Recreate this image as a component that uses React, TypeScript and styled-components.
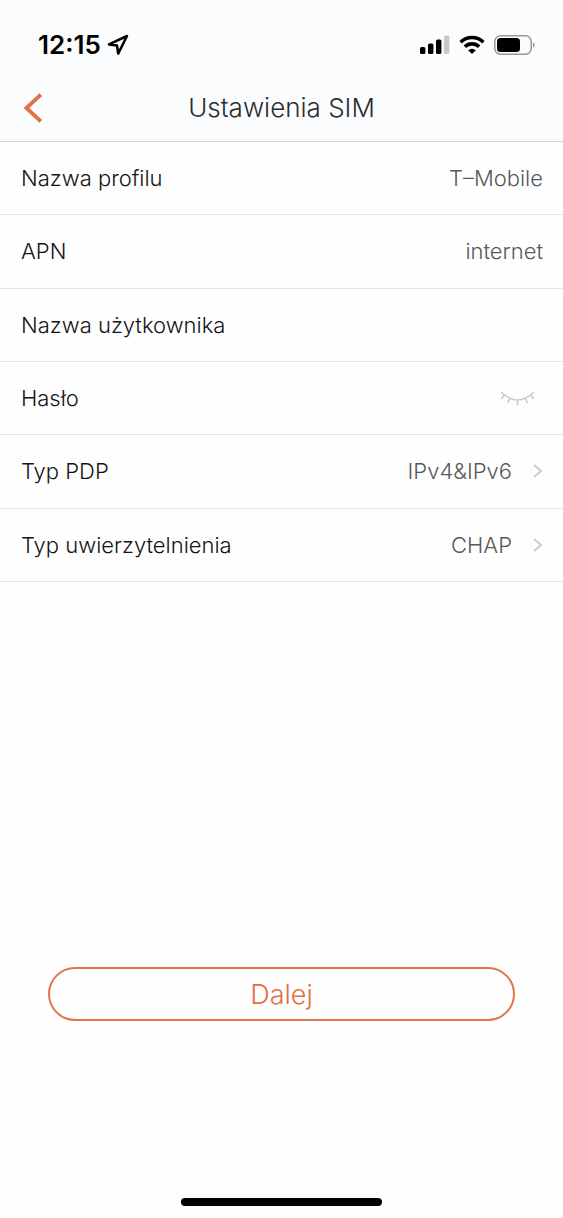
import React, { useState } from "react";
import styled, { createGlobalStyle } from "styled-components";

const accent = "#e36f43";

const GlobalStyle = createGlobalStyle`
  *, *::before, *::after { box-sizing: border-box; }
  body {
    margin: 0;
    background: #fefefe;
    font-family: Inter, "Liberation Sans", sans-serif;
    color: #141416;
  }
  button, input, select { font: inherit; color: inherit; }
`;

const Screen = styled.div`
  display: flex;
  flex-direction: column;
  min-height: 100vh;
`;

const Header = styled.header`
  background: #fafcfe;
  border-bottom: 1px solid #d2d6db;
`;

const StatusBar = styled.div`
  display: flex;
  align-items: center;
  justify-content: space-between;
  height: 74px;
  padding: 15px 27px 0 38px;
  color: #000;
`;

const Clock = styled.div`
  display: flex;
  align-items: center;
  gap: 6px;
  font-size: 26px;
  font-weight: 600;
  line-height: 32px;
`;

const StatusIcons = styled.div`
  display: flex;
  align-items: center;
  gap: 9px;
`;

const NavBar = styled.div`
  display: grid;
  grid-template-columns: 60px 1fr 60px;
  align-items: center;
  height: 67px;
`;

const BackButton = styled.button`
  display: flex;
  align-items: center;
  height: 48px;
  padding: 0 0 0 23px;
  border: 0;
  background: none;
  color: ${accent};
`;

const Title = styled.h1`
  margin: 0;
  text-align: center;
  font-size: 26px;
  font-weight: 300;
  line-height: 32px;
  color: #2c2c30;
`;

const Form = styled.form`
  display: flex;
  flex: 1;
  flex-direction: column;
`;

const Fields = styled.div`
  display: grid;
  grid-auto-rows: 1fr;
  min-height: 440px;
`;

const Row = styled.div`
  display: flex;
  align-items: center;
  gap: 16px;
  padding: 0 20px 0 21px;
  border-bottom: 1px solid #e3e3e4;
  font-size: 22px;
  font-weight: 300;
  line-height: 32px;
`;

const Label = styled.label`
  flex: none;
`;

const TextInput = styled.input`
  flex: 1;
  min-width: 0;
  height: 48px;
  padding: 0;
  border: 0;
  outline: 0;
  background: none;
  text-align: right;
  color: #58585b;
`;

const SelectInput = styled.select`
  flex: 1;
  min-width: 0;
  height: 48px;
  padding: 0;
  border: 0;
  outline: 0;
  appearance: none;
  background: none;
  text-align-last: right;
  color: #58585b;
`;

const EyeButton = styled.button`
  display: flex;
  align-items: center;
  height: 48px;
  padding: 0 8px;
  border: 0;
  background: none;
  color: #cbcbcd;
`;

const Actions = styled.div`
  margin-top: auto;
  padding: 48px 48px 177px;
`;

const NextButton = styled.button`
  display: block;
  width: 100%;
  height: 54px;
  padding: 1px 0 0;
  border: 2px solid #e1754a;
  border-radius: 27px;
  background: none;
  color: ${accent};
  font-size: 27px;
  font-weight: 300;
  line-height: 32px;
`;

const HomeIndicator = styled.div`
  width: 201px;
  height: 8px;
  margin: 0 auto 12px;
  border-radius: 4px;
  background: #000;
`;

const LocationIcon = () => (
  <svg width="22" height="22" viewBox="0 0 22 22" fill="none" stroke="currentColor" strokeWidth="2.5" strokeLinejoin="round" aria-hidden="true">
    <path d="M20 2 2 10.4 10 11.4 11.2 19.6Z" />
  </svg>
);

const SignalIcon = () => (
  <svg width="30" height="20" viewBox="0 0 30 20" fill="currentColor" aria-hidden="true">
    <rect x="0" y="12" width="5.4" height="7" rx="1.5" />
    <rect x="8" y="8.5" width="5.4" height="10.5" rx="1.5" />
    <rect x="16" y="4.5" width="5.4" height="14.5" rx="1.5" />
    <rect x="24" y="0.5" width="5.4" height="18.5" rx="1.5" fill="#c8c9cb" />
  </svg>
);

const WifiIcon = () => (
  <svg width="26" height="20" viewBox="0 0 26 20" fill="none" stroke="currentColor" strokeWidth="3.6" aria-hidden="true">
    <path d="M1.6 7.2a16.3 16.3 0 0 1 22.8 0" />
    <path d="M5.9 11.8a10.2 10.2 0 0 1 14.2 0" />
    <path d="M13 19 9.2 15.2a5.5 5.5 0 0 1 7.6 0Z" fill="currentColor" stroke="none" />
  </svg>
);

const BatteryIcon = () => (
  <svg width="42" height="20" viewBox="0 0 42 20" aria-hidden="true">
    <rect x="0.8" y="0.8" width="36.4" height="18.4" rx="5.6" fill="none" stroke="#97989a" strokeWidth="1.5" />
    <rect x="3" y="3" width="23" height="14" rx="3.5" fill="currentColor" />
    <path d="M39 7.2a3.2 3.2 0 0 1 0 5.6Z" fill="#97989a" />
  </svg>
);

const BackIcon = () => (
  <svg width="20" height="30" viewBox="0 0 20 30" fill="none" stroke="currentColor" strokeWidth="3.8" aria-hidden="true">
    <path d="M17.8 1.6 3.4 15 17.8 28.4" />
  </svg>
);

const ClosedEyeIcon = () => (
  <svg width="35" height="16" viewBox="0 0 35 16" fill="none" stroke="currentColor" strokeWidth="1.6" aria-hidden="true">
    <path d="M1 2Q17.5 18 34 2M4.2 5 1.3 9M9.6 8.6 7.6 13M17.5 10V15.6M25.4 8.6 27.4 13M30.8 5 33.7 9" />
  </svg>
);

const ChevronIcon = () => (
  <svg width="11" height="16" viewBox="0 0 11 16" fill="none" stroke="#cbcbcd" strokeWidth="2" aria-hidden="true">
    <path d="M2 2 9 8 2 14" />
  </svg>
);

const SelectArrow = styled.span`
  display: flex;
  margin-left: 4px;
`;

interface TextRowProps {
  id: string;
  label: string;
  value?: string;
}

const TextRow = ({ id, label, value = "" }: TextRowProps) => (
  <Row>
    <Label htmlFor={id}>{label}</Label>
    <TextInput id={id} type="text" defaultValue={value} />
  </Row>
);

interface SelectRowProps {
  id: string;
  label: string;
  options: string[];
}

const SelectRow = ({ id, label, options }: SelectRowProps) => (
  <Row>
    <Label htmlFor={id}>{label}</Label>
    <SelectInput id={id} defaultValue={options[0]}>
      {options.map((option) => (
        <option key={option}>{option}</option>
      ))}
    </SelectInput>
    <SelectArrow>
      <ChevronIcon />
    </SelectArrow>
  </Row>
);

export default function App() {
  const [visible, setVisible] = useState(false);

  return (
    <>
      <GlobalStyle />
      <Screen>
        <Header>
          <StatusBar>
            <Clock>
              12:15
              <LocationIcon />
            </Clock>
            <StatusIcons>
              <SignalIcon />
              <WifiIcon />
              <BatteryIcon />
            </StatusIcons>
          </StatusBar>
          <NavBar>
            <BackButton type="button" aria-label="Wstecz">
              <BackIcon />
            </BackButton>
            <Title>Ustawienia SIM</Title>
          </NavBar>
        </Header>
        <Form onSubmit={(event) => event.preventDefault()}>
          <Fields>
            <TextRow id="profile" label="Nazwa profilu" value="T–Mobile" />
            <TextRow id="apn" label="APN" value="internet" />
            <TextRow id="user" label="Nazwa użytkownika" />
            <Row>
              <Label htmlFor="password">Hasło</Label>
              <TextInput id="password" type={visible ? "text" : "password"} />
              <EyeButton type="button" aria-label="Pokaż hasło" onClick={() => setVisible(!visible)}>
                <ClosedEyeIcon />
              </EyeButton>
            </Row>
            <SelectRow id="pdp" label="Typ PDP" options={["IPv4&IPv6"]} />
            <SelectRow id="auth" label="Typ uwierzytelnienia" options={["CHAP"]} />
          </Fields>
          <Actions>
            <NextButton type="submit">Dalej</NextButton>
          </Actions>
        </Form>
        <HomeIndicator />
      </Screen>
    </>
  );
}
